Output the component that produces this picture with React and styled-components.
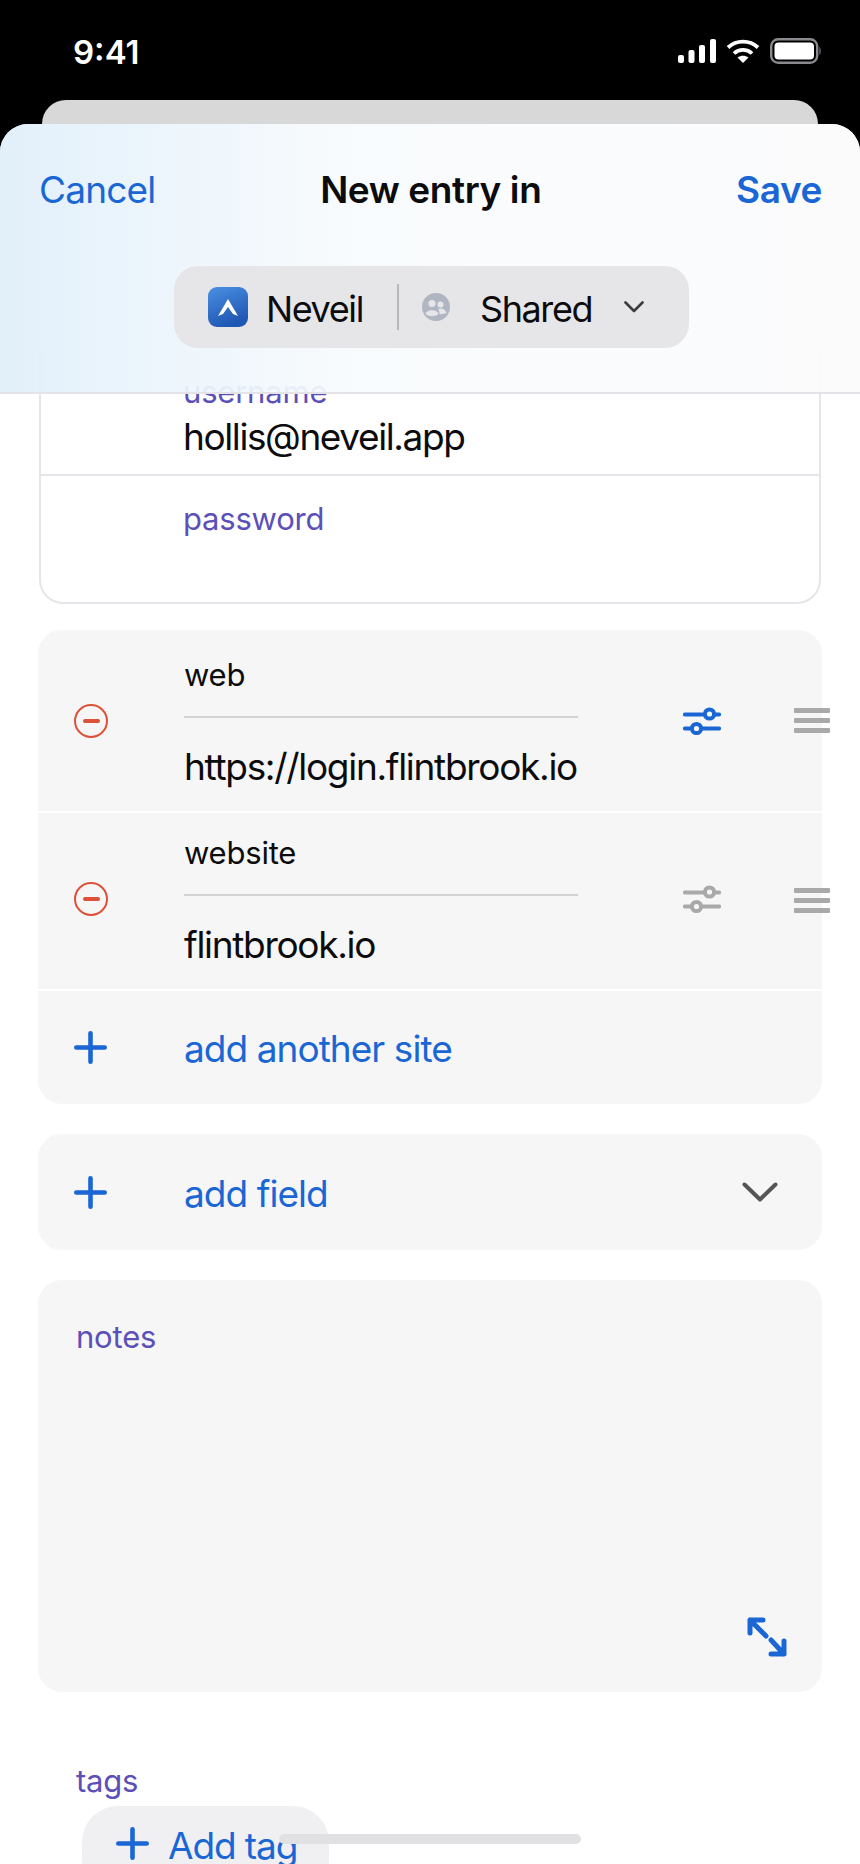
import styled, { createGlobalStyle } from "styled-components";

const GlobalStyle = createGlobalStyle`
  html, body {
    margin: 0;
    padding: 0;
    background: #000;
  }
  * {
    box-sizing: border-box;
  }
`;

const BLUE = "#1a66d4";
const PURPLE = "#5c50b8";
const CARD = "#f6f6f7";

const Screen = styled.div`
  width: 860px;
  height: 1864px;
  display: flex;
  flex-direction: column;
  position: relative;
  overflow: hidden;
  background: #000;
  font-family: Inter, "Liberation Sans", sans-serif;
  color: #0c0c0e;
`;
const StatusBar = styled.div`
  height: 100px;
  flex: none;
  display: flex;
  justify-content: space-between;
  padding: 32px 38px 0 73px;
  color: #fff;
`;
const Clock = styled.div`
  font-size: 33px;
  line-height: 40px;
  font-weight: 600;
`;
const StatusIcons = styled.div`
  display: flex;
  align-items: flex-start;
  gap: 10px;
  padding-top: 6px;
`;
const BackCard = styled.div`
  height: 24px;
  flex: none;
  margin: 0 42px;
  background: #d8d8d8;
  border-radius: 24px 24px 0 0;
`;
const Sheet = styled.div`
  flex: 1;
  position: relative;
  background: #fff;
  border-radius: 28px 28px 0 0;
  overflow: hidden;
`;
const Header = styled.div`
  position: absolute;
  top: 0;
  left: 0;
  right: 0;
  height: 270px;
  border-bottom: 2px solid #e3e3e8;
  background: linear-gradient(
    90deg,
    rgba(224, 239, 250, 0.93) 0%,
    rgba(236, 245, 252, 0.93) 20%,
    rgba(248, 251, 253, 0.93) 42%,
    rgba(251, 251, 252, 0.93) 100%
  );
`;
const NavRow = styled.div`
  display: flex;
  justify-content: space-between;
  align-items: baseline;
  padding: 44px 38px 0 39px;
  font-size: 37px;
  line-height: 44px;
`;
const NavLink = styled.span`
  color: ${BLUE};
  font-weight: ${(props) => (props.$bold ? 600 : 400)};
  letter-spacing: ${(props) => (props.$bold ? -0.4 : -0.8)}px;
`;
const Title = styled.span`
  font-weight: 600;
  letter-spacing: -0.4px;
  margin-left: -30px;
`;
const Picker = styled.div`
  width: 515px;
  height: 82px;
  margin: 54px 0 0 174px;
  display: flex;
  align-items: center;
  padding-left: 34px;
  border-radius: 24px;
  background: #e6e6e9;
  font-size: 36px;
  letter-spacing: -1.4px;
`;
const PickerName = styled.span`
  margin-left: ${(props) => props.$gap}px;
  padding-top: 3px;
`;
const PickerDivider = styled.div`
  width: 2px;
  height: 46px;
  margin: 0 23px 0 34px;
  background: #b8b8bc;
`;
const PickerChevron = styled.svg`
  margin-left: 32px;
  flex: none;
`;
const Content = styled.div`
  display: flex;
  flex-direction: column;
  padding: 225px 38px 0;
`;
const LoginCard = styled.div`
  margin: 0 1px;
  border: 2px solid #e5e5ea;
  border-top: none;
  border-radius: 0 0 24px 24px;
`;
const LoginRow = styled.div`
  height: ${(props) => props.$height}px;
  padding: 25px 0 0 142px;
  border-bottom: ${(props) => (props.$divider ? "2px solid #e5e5ea" : "none")};
`;
const FieldLabel = styled.div`
  font-size: 31px;
  line-height: 36px;
  letter-spacing: -0.2px;
  color: ${(props) => props.color || PURPLE};
`;
const FieldValue = styled.div`
  font-size: 37px;
  line-height: 44px;
  letter-spacing: -1.4px;
  margin-top: 5px;
`;
const SitesCard = styled.div`
  display: flex;
  flex-direction: column;
  gap: 2px;
  margin-top: 26px;
  border-radius: 24px;
  overflow: hidden;
`;
const SiteRow = styled.div`
  height: ${(props) => (props.$first ? 181 : 176)}px;
  padding-top: ${(props) => (props.$first ? 5 : 0)}px;
  display: grid;
  grid-template-columns: 146px 394px 105px 38px;
  align-items: start;
  background: ${CARD};
`;
const IconCell = styled.div`
  height: 172px;
  display: flex;
  align-items: center;
  padding-left: ${(props) => props.$inset || 0}px;
`;
const SiteField = styled.div`
  display: flex;
  flex-direction: column;
  padding-top: 22px;
`;
const SiteLine = styled.div`
  height: 2px;
  margin: 23px 0 0 0;
  background: #d2d2d4;
`;
const SiteValue = styled.div`
  font-size: 37px;
  line-height: 44px;
  letter-spacing: -1.3px;
  margin-top: 27px;
`;
const DragHandle = styled.div`
  position: absolute;
  left: 794px;
  width: 36px;
  top: ${(props) => props.$top}px;
  height: 25px;
  display: flex;
  flex-direction: column;
  justify-content: space-between;
  & span {
    display: block;
    height: 5px;
    border-radius: 1px;
    background: #a9a9a9;
  }
`;
const ActionRow = styled.div`
  height: ${(props) => props.$height}px;
  display: flex;
  align-items: center;
  padding: 0 44px 0 36px;
  background: ${CARD};
  border-radius: ${(props) => (props.$round ? "24px" : "0")};
  margin-top: ${(props) => props.$top || 0}px;
`;
const ActionLabel = styled.span`
  flex: 1;
  margin-left: 77px;
  padding-top: ${(props) => props.$drop}px;
  font-size: 37px;
  line-height: 44px;
  letter-spacing: -0.95px;
  color: ${BLUE};
`;
const NotesCard = styled.div`
  height: 412px;
  margin-top: 30px;
  padding: 39px 35px 35px 38px;
  display: flex;
  flex-direction: column;
  justify-content: space-between;
  border-radius: 24px;
  background: ${CARD};
`;
const ExpandIcon = styled.svg`
  align-self: flex-end;
`;
const TagsBlock = styled.div`
  padding: 71px 0 0 38px;
`;
const AddTag = styled.div`
  width: 247px;
  height: 90px;
  margin: 7px 0 0 6px;
  padding: 21px 0 0 34px;
  display: flex;
  align-items: flex-start;
  gap: 19px;
  border-radius: 36px;
  background: #f0f0f2;
  font-size: 37px;
  line-height: 44px;
  letter-spacing: -1.1px;
  color: ${BLUE};
  & span {
    margin-top: -3px;
  }
`;
const HomeIndicator = styled.div`
  position: absolute;
  left: 279px;
  top: 1834px;
  width: 302px;
  height: 10px;
  border-radius: 5px;
  background: #e1e1e3;
`;

const Signal = () => (
  <svg width="38" height="26" viewBox="0 0 38 26" fill="#fff">
    <rect x="0" y="17" width="6" height="8" rx="2" />
    <rect x="10.5" y="12" width="6" height="13" rx="2" />
    <rect x="21" y="7" width="6" height="18" rx="2" />
    <rect x="32" y="1" width="6" height="24" rx="2" />
  </svg>
);

const Wifi = () => (
  <svg width="34" height="25" viewBox="0 0 34 25" fill="none" stroke="#fff" strokeWidth="3.8">
    <path d="M2 9.5 A22 22 0 0 1 32 9.5" />
    <path d="M8 15.5 A13 13 0 0 1 26 15.5" />
    <path d="M11.5 19.5 L17 25 L22.5 19.5 C19 17 15 17 11.5 19.5 Z" fill="#fff" stroke="none" />
  </svg>
);

const Battery = () => (
  <svg width="52" height="26" viewBox="0 0 52 26" fill="none">
    <rect x="1.2" y="1.2" width="46" height="23.6" rx="7" stroke="#8a8a8e" strokeWidth="2.4" />
    <rect x="4.5" y="4.5" width="39.5" height="17" rx="4" fill="#fff" />
    <path d="M49.5 9 C51 10 51 16 49.5 17 Z" fill="#8a8a8e" />
  </svg>
);

const Logo = () => (
  <svg width="40" height="40" viewBox="0 0 40 40">
    <defs>
      <linearGradient id="logoFill" x1="0" y1="0" x2="0.4" y2="1">
        <stop offset="0" stopColor="#4a90e2" />
        <stop offset="1" stopColor="#1f58b4" />
      </linearGradient>
    </defs>
    <rect width="40" height="40" rx="9" fill="url(#logoFill)" />
    <path d="M20 12 L30 29 L25 27 L20 20 L15 27 L10 29 Z" fill="#fff" />
  </svg>
);

const SharedAvatar = () => (
  <svg width="28" height="28" viewBox="0 0 28 28">
    <circle cx="14" cy="14" r="14" fill="#b0b5c2" />
    <circle cx="10" cy="10.5" r="3.6" fill="#e6e6e9" />
    <circle cx="18.5" cy="11.5" r="3" fill="#e6e6e9" />
    <path d="M3.5 21 C4.5 16 15.5 16 16.5 21 C13 24 7 24 3.5 21 Z" fill="#e6e6e9" />
    <path d="M17.5 21 C17.5 18.5 17 17 16 16 C19.5 14.5 23.5 16 24.5 20 C22.5 21 20 21.5 17.5 21 Z" fill="#e6e6e9" />
  </svg>
);

const MinusCircle = () => (
  <svg width="34" height="34" viewBox="0 0 34 34" fill="none" stroke="#dd5138">
    <circle cx="17" cy="17" r="16" strokeWidth="2" />
    <path d="M11 17 H24" strokeWidth="4" strokeLinecap="round" />
  </svg>
);

const Sliders = ({ color }) => (
  <svg width="38" height="28" viewBox="0 0 38 28" fill="none" stroke={color} strokeWidth="4.2" strokeLinecap="round">
    <path d="M2 7.5 H36 M2 21.5 H36" />
    <circle cx="26.5" cy="7" r="4.6" fill={CARD} strokeWidth="4" />
    <circle cx="13.5" cy="21.5" r="4.6" fill={CARD} strokeWidth="4" />
  </svg>
);

const Plus = () => (
  <svg width="33" height="33" viewBox="0 0 33 33" fill="none" stroke={BLUE} strokeWidth="4.6" strokeLinecap="round">
    <path d="M16.5 2.3 V30.7 M2.3 16.5 H30.7" />
  </svg>
);

const App = () => {
  return (
    <Screen>
      <GlobalStyle />
      <StatusBar>
        <Clock>9:41</Clock>
        <StatusIcons>
          <Signal />
          <Wifi />
          <Battery />
        </StatusIcons>
      </StatusBar>
      <BackCard />
      <Sheet>
        <Content>
          <LoginCard>
            <LoginRow $height={127} $divider>
              <FieldLabel>username</FieldLabel>
              <FieldValue>hollis@neveil.app</FieldValue>
            </LoginRow>
            <LoginRow $height={126}>
              <FieldLabel>password</FieldLabel>
            </LoginRow>
          </LoginCard>

          <SitesCard>
            {[
              { label: "web", value: "https://login.flintbrook.io", tune: BLUE, first: true },
              { label: "website", value: "flintbrook.io", tune: "#a9a9a9" },
            ].map((site) => (
              <SiteRow key={site.label} $first={site.first}>
                <IconCell $inset={36}>
                  <MinusCircle />
                </IconCell>
                <SiteField>
                  <FieldLabel color="#0c0c0e">{site.label}</FieldLabel>
                  <SiteLine />
                  <SiteValue>{site.value}</SiteValue>
                </SiteField>
                <span />
                <IconCell>
                  <Sliders color={site.tune} />
                </IconCell>
              </SiteRow>
            ))}
            <ActionRow $height={113}>
              <Plus />
              <ActionLabel $drop={2}>add another site</ActionLabel>
            </ActionRow>
          </SitesCard>

          <ActionRow $height={116} $round $top={30}>
            <Plus />
            <ActionLabel $drop={4}>add field</ActionLabel>
            <svg width="36" height="20" viewBox="0 0 36 20" fill="none" stroke="#555" strokeWidth="4" strokeLinecap="round" strokeLinejoin="round">
              <path d="M2.5 2.5 L18 17.5 L33.5 2.5" />
            </svg>
          </ActionRow>

          <NotesCard>
            <FieldLabel>notes</FieldLabel>
            <ExpandIcon width="40" height="40" viewBox="0 0 40 40" fill="none" stroke={BLUE} strokeWidth="5" strokeLinecap="round" strokeLinejoin="round">
              <path d="M3 16 V3 H16 M3 3 L19 19 M24 23 L37 37 M37 24 V37 H24" />
            </ExpandIcon>
          </NotesCard>

          <TagsBlock>
            <FieldLabel>tags</FieldLabel>
            <AddTag>
              <Plus />
              <span>Add tag</span>
            </AddTag>
          </TagsBlock>
        </Content>

        <Header>
          <NavRow>
            <NavLink>Cancel</NavLink>
            <Title>New entry in</Title>
            <NavLink $bold>Save</NavLink>
          </NavRow>
          <Picker>
            <Logo />
            <PickerName $gap={18}>Neveil</PickerName>
            <PickerDivider />
            <SharedAvatar />
            <PickerName $gap={30}>Shared</PickerName>
            <PickerChevron width="20" height="12" viewBox="0 0 20 12" fill="none" stroke="#3c3c40" strokeWidth="2.6" strokeLinecap="round" strokeLinejoin="round">
              <path d="M1.5 1.5 L10 10 L18.5 1.5" />
            </PickerChevron>
          </Picker>
        </Header>
      </Sheet>
      <DragHandle $top={708}>
        <span />
        <span />
        <span />
      </DragHandle>
      <DragHandle $top={888}>
        <span />
        <span />
        <span />
      </DragHandle>
      <HomeIndicator />
    </Screen>
  );
};

export default App;
